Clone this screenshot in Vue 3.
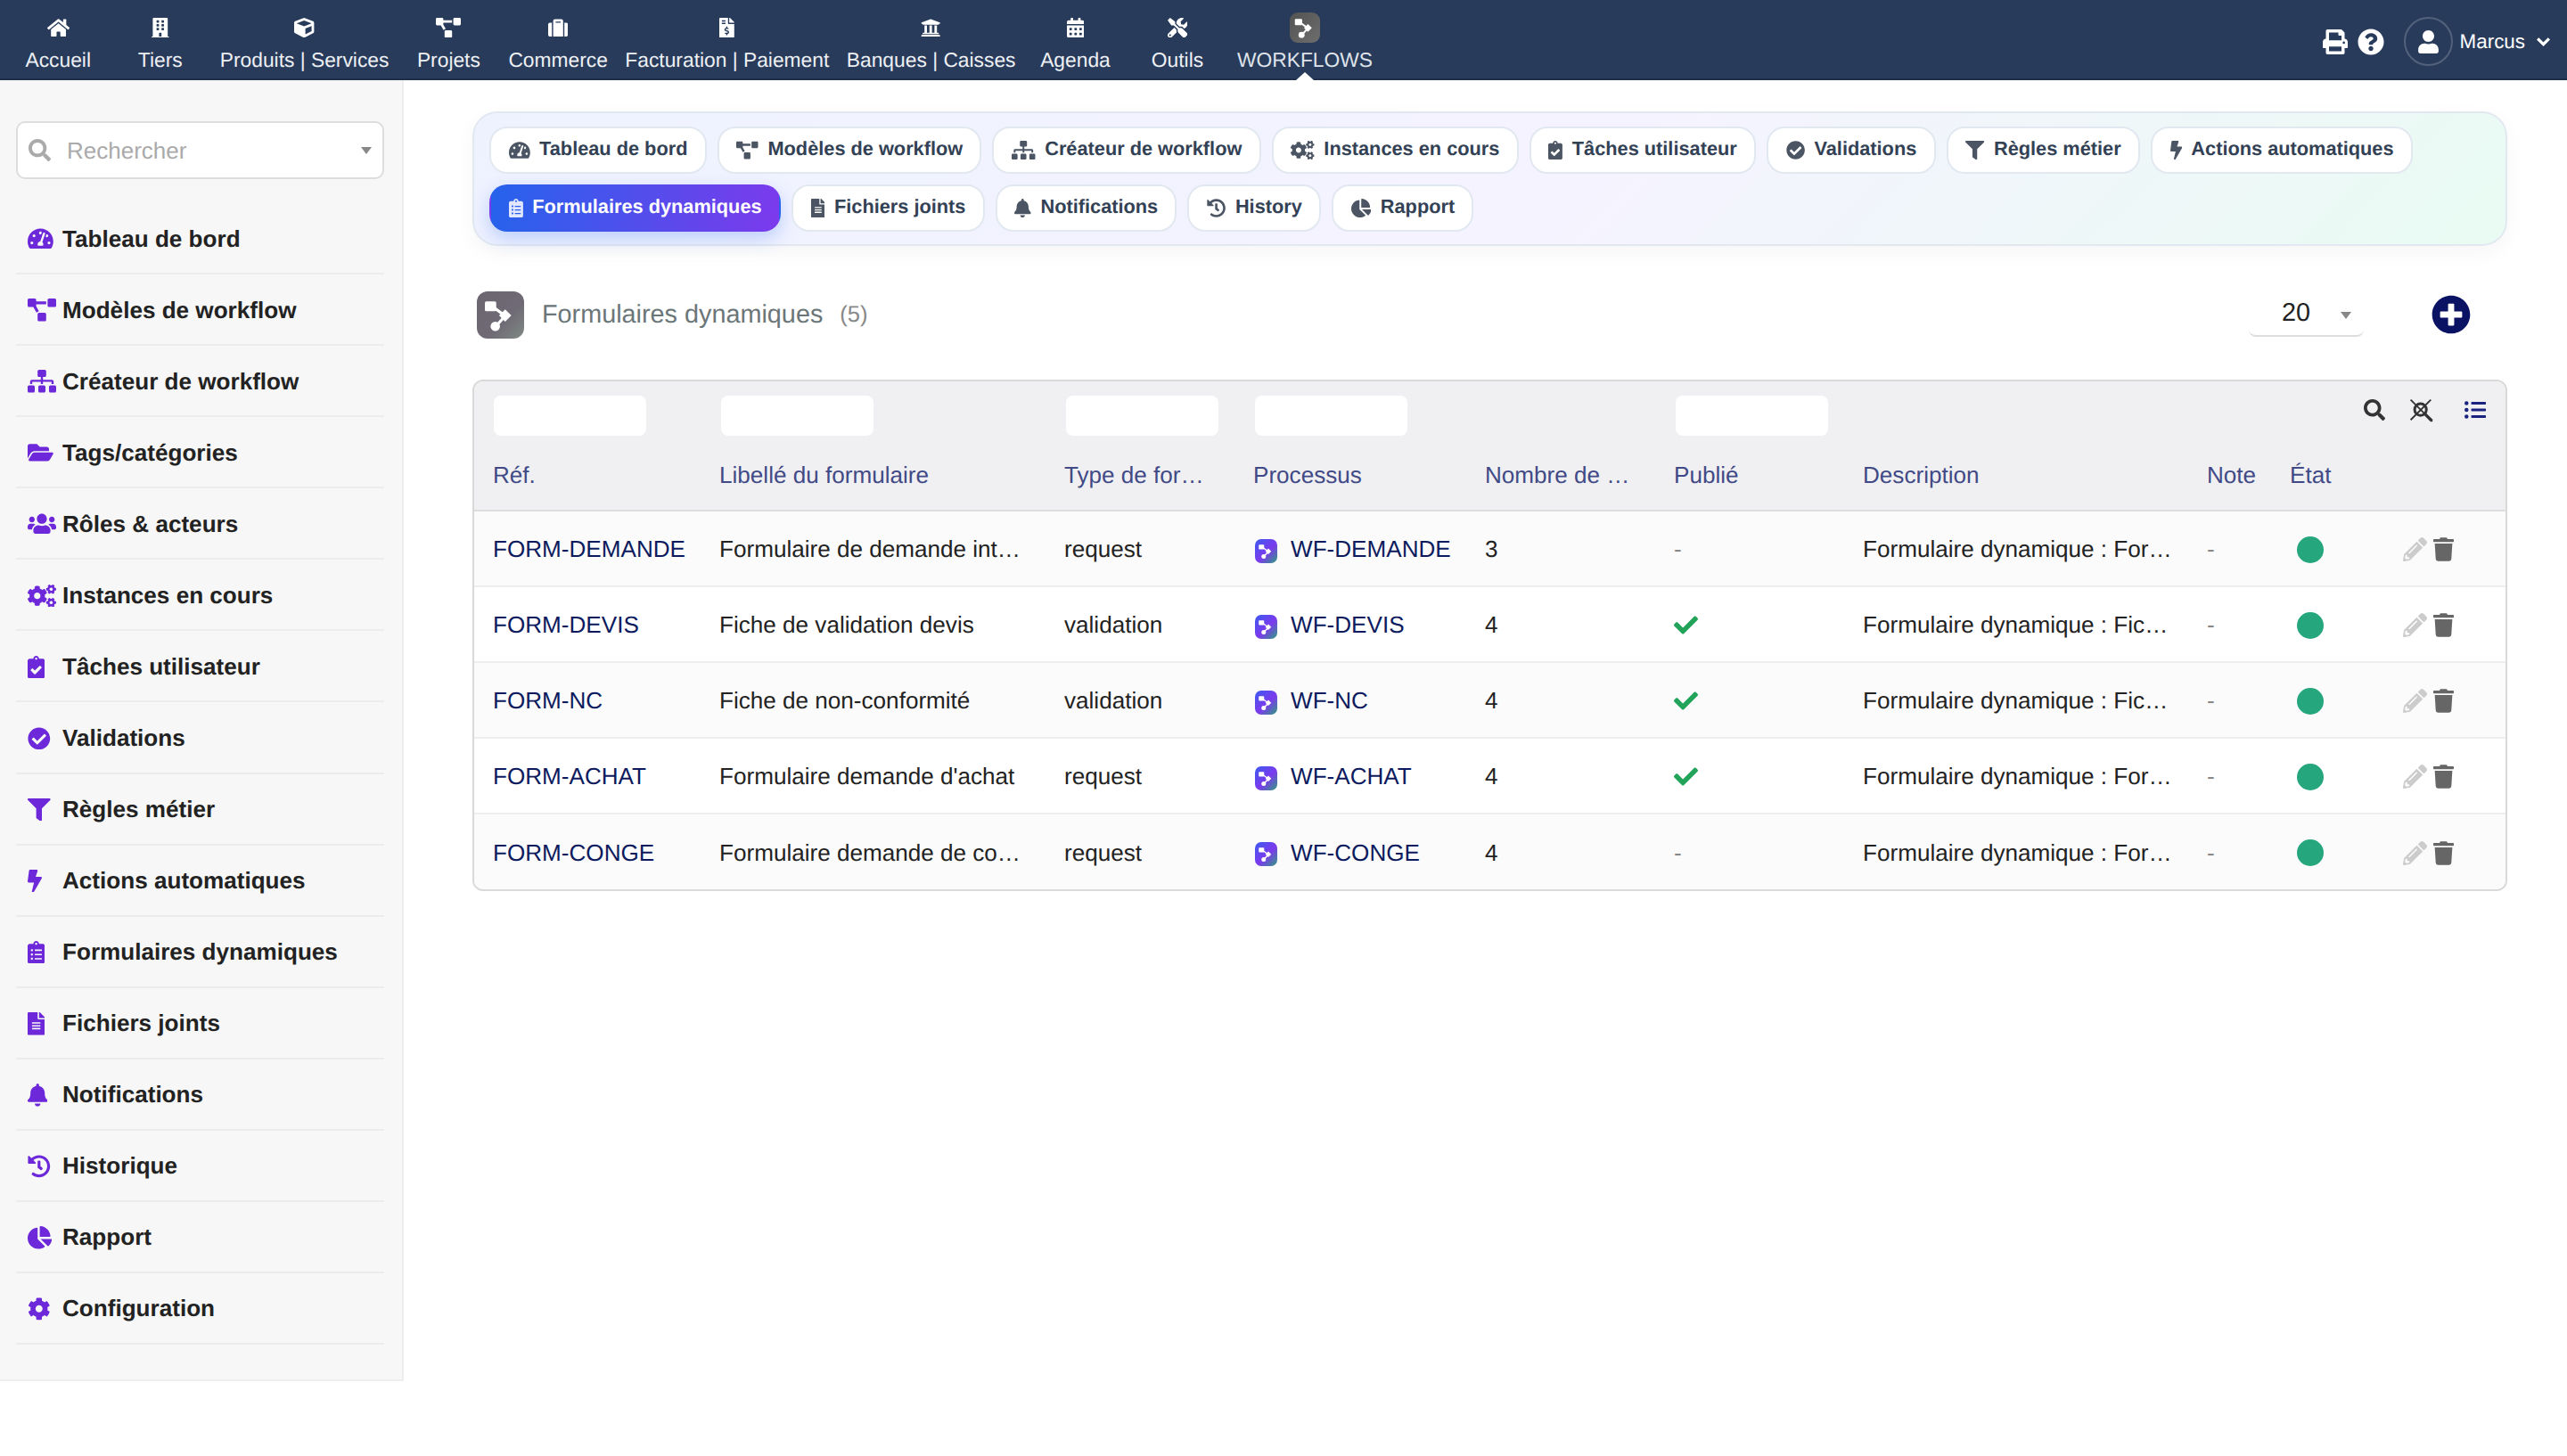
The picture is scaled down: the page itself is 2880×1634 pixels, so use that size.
<template>
  <div class="app">
    <!-- Barre du haut -->
    <header class="topbar">
      <nav class="topnav">
        <a v-for="item in topItems" :key="item.label" class="topnav-item" :class="{ active: item.active }">
          <span class="topnav-icon">
            <span v-if="item.active" class="wf-box">
              <svg viewBox="0 0 100 100" class="wf-glyph"><use href="#wf-glyph" /></svg>
            </span>
            <svg v-else :viewBox="`0 0 ${icons[item.icon].w} 512`" class="ico"><path :d="icons[item.icon].d" /></svg>
          </span>
          <span class="topnav-label">{{ item.label }}</span>
        </a>
      </nav>
      <div class="topright">
        <svg viewBox="0 0 512 512" class="ico top-print"><path :d="icons.print.d" /></svg>
        <svg viewBox="0 0 512 512" class="ico top-help"><path :d="icons.help.d" /></svg>
        <span class="avatar">
          <svg viewBox="0 0 448 512" class="ico"><path :d="icons.user.d" /></svg>
        </span>
        <span class="username">Marcus</span>
        <svg viewBox="0 0 16 10" class="chevron"><polyline points="2,2 8,8 14,2" /></svg>
      </div>
    </header>

    <!-- définition du glyphe workflow -->
    <svg class="defs" width="0" height="0">
      <defs>
        <g id="wf-glyph">
          <path d="M30 30 L60 52 L40 74" fill="none" stroke="currentColor" stroke-width="6" />
          <rect x="17" y="21" width="24" height="21" rx="3" fill="currentColor" />
          <path d="M60 38 L73 51 L60 64 L47 51 Z" fill="currentColor" />
          <circle cx="39" cy="74" r="10" fill="currentColor" />
        </g>
      </defs>
    </svg>

    <div class="layout">
      <!-- Menu latéral -->
      <aside class="sidebar">
        <div class="side-search">
          <svg viewBox="0 0 512 512" class="ico"><path :d="icons.search.d" /></svg>
          <input type="text" placeholder="Rechercher" />
          <span class="caret"></span>
        </div>
        <ul class="side-menu">
          <li v-for="item in sideItems" :key="item.label" class="side-item">
            <span class="side-icon">
              <svg :viewBox="`0 0 ${icons[item.icon].w} 512`" class="ico"><path :d="icons[item.icon].d" /></svg>
            </span>
            <span>{{ item.label }}</span>
          </li>
        </ul>
      </aside>

      <main class="content">
        <!-- Onglets -->
        <div class="tabs">
          <a v-for="tab in tabs" :key="tab.label" class="tab" :class="{ active: tab.active }">
            <svg :viewBox="`0 0 ${icons[tab.icon].w} 512`" class="ico"><path :d="icons[tab.icon].d" /></svg>
            <span>{{ tab.label }}</span>
          </a>
        </div>

        <div class="title-row">
          <span class="title-icon">
            <svg viewBox="0 0 100 100" class="title-glyph"><use href="#wf-glyph" /></svg>
          </span>
          <h1 class="title">Formulaires dynamiques</h1>
          <span class="count">(5)</span>
          <div class="limit">
            <span>20</span>
            <span class="caret"></span>
          </div>
          <svg viewBox="0 0 512 512" class="ico add-btn"><path :d="icons.plus.d" /></svg>
        </div>

        <!-- Liste -->
        <div class="card">
          <table class="list">
            <colgroup>
              <col class="c-ref" /><col class="c-label" /><col class="c-type" /><col class="c-proc" />
              <col class="c-nb" /><col class="c-pub" /><col class="c-desc" /><col class="c-note" />
              <col class="c-state" /><col class="c-act" />
            </colgroup>
            <thead>
              <tr class="filters">
                <th><input type="text" /></th>
                <th><input type="text" /></th>
                <th><input type="text" /></th>
                <th><input type="text" /></th>
                <th></th>
                <th><input type="text" /></th>
                <th colspan="4">
                  <div class="tools">
                    <svg viewBox="0 0 512 512" class="ico tool"><path :d="icons.search.d" /></svg>
                    <svg viewBox="0 0 512 512" class="tool tool-clear">
                      <circle cx="240" cy="240" r="125" fill="none" stroke="#333" stroke-width="56" />
                      <path d="M30 30 L490 490 M460 30 L30 460" stroke="#333" stroke-width="36" fill="none" />
                      <path d="M340 340 L480 480" stroke="#333" stroke-width="64" fill="none" />
                    </svg>
                    <svg viewBox="0 0 512 512" class="ico tool tool-list"><path :d="icons.list.d" /></svg>
                  </div>
                </th>
              </tr>
              <tr class="labels">
                <th v-for="h in headers" :key="h">{{ h }}</th>
                <th></th>
              </tr>
            </thead>
            <tbody>
              <tr v-for="row in rows" :key="row.ref">
                <td><a class="link">{{ row.ref }}</a></td>
                <td>{{ row.label }}</td>
                <td>{{ row.type }}</td>
                <td>
                  <span class="proc">
                    <span class="proc-icon">
                      <svg viewBox="0 0 100 100"><use href="#wf-glyph" /></svg>
                    </span>
                    <a class="link">{{ row.proc }}</a>
                  </span>
                </td>
                <td>{{ row.nb }}</td>
                <td>
                  <svg v-if="row.pub" viewBox="0 0 512 512" class="ico check"><path :d="icons.check.d" /></svg>
                  <span v-else class="dash">-</span>
                </td>
                <td>{{ row.desc }}</td>
                <td><span class="dash">-</span></td>
                <td><span class="dot"></span></td>
                <td>
                  <span class="actions">
                    <svg viewBox="0 0 512 512" class="ico pencil"><path :d="icons.pencil.d" /></svg>
                    <svg viewBox="0 0 448 512" class="ico trash"><path :d="icons.trash.d" /></svg>
                  </span>
                </td>
              </tr>
            </tbody>
          </table>
        </div>
      </main>
    </div>
  </div>
</template>

<script setup>
// tracés des icônes
const icons = {
  home: { w: 576, d: 'M280.37 148.26L96 300.11V464a16 16 0 0 0 16 16l112.06-.29a16 16 0 0 0 15.92-16V368a16 16 0 0 1 16-16h64a16 16 0 0 1 16 16v95.64a16 16 0 0 0 16 16.05L464 480a16 16 0 0 0 16-16V300L295.67 148.26a12.19 12.19 0 0 0-15.3 0zM571.6 251.47L488 182.56V44.05a12 12 0 0 0-12-12h-56a12 12 0 0 0-12 12v72.61L318.47 43a48 48 0 0 0-61 0L4.34 251.47a12 12 0 0 0-1.6 16.9l25.5 31A12 12 0 0 0 45.15 301l235.22-193.74a12.19 12.19 0 0 1 15.3 0L530.9 301a12 12 0 0 0 16.9-1.6l25.5-31a12 12 0 0 0-1.7-16.93z' },
  building: { w: 448, d: 'M436 480h-20V24c0-13.255-10.745-24-24-24H56C42.745 0 32 10.745 32 24v456H12c-6.627 0-12 5.373-12 12v20h448v-20c0-6.627-5.373-12-12-12zM128 76c0-6.627 5.373-12 12-12h40c6.627 0 12 5.373 12 12v40c0 6.627-5.373 12-12 12h-40c-6.627 0-12-5.373-12-12V76zm0 96c0-6.627 5.373-12 12-12h40c6.627 0 12 5.373 12 12v40c0 6.627-5.373 12-12 12h-40c-6.627 0-12-5.373-12-12v-40zm52 148h-40c-6.627 0-12-5.373-12-12v-40c0-6.627 5.373-12 12-12h40c6.627 0 12 5.373 12 12v40c0 6.627-5.373 12-12 12zm76 160h-64v-84c0-6.627 5.373-12 12-12h40c6.627 0 12 5.373 12 12v84zm64-172c0 6.627-5.373 12-12 12h-40c-6.627 0-12-5.373-12-12v-40c0-6.627 5.373-12 12-12h40c6.627 0 12 5.373 12 12v40zm0-96c0 6.627-5.373 12-12 12h-40c-6.627 0-12-5.373-12-12v-40c0-6.627 5.373-12 12-12h40c6.627 0 12 5.373 12 12v40zm0-96c0 6.627-5.373 12-12 12h-40c-6.627 0-12-5.373-12-12V76c0-6.627 5.373-12 12-12h40c6.627 0 12 5.373 12 12v40z' },
  cube: { w: 512, d: 'M239.1 6.3l-208 78c-18.7 7-31.1 25-31.1 45v225.1c0 18.2 10.3 34.8 26.5 42.9l208 104c13.5 6.8 29.4 6.8 42.9 0l208-104c16.3-8.1 26.5-24.8 26.5-42.9V129.3c0-20-12.4-37.9-31.1-44.9l-208-78C262 2.2 250 2.2 239.1 6.3zM256 68.4l192 72v1.1l-192 78-192-78v-1.1l192-72zm32 356V275.5l160-65v133.9l-160 80z' },
  diagram: { w: 640, d: 'M384 320H256c-17.67 0-32 14.33-32 32v128c0 17.67 14.33 32 32 32h128c17.67 0 32-14.33 32-32V352c0-17.67-14.33-32-32-32zM192 32c0-17.67-14.33-32-32-32H32C14.33 0 0 14.33 0 32v128c0 17.67 14.33 32 32 32h95.72l73.16 128.04C211.98 300.98 232.4 288 256 288h.28L192 175.51V128h224V64H192V32zM608 0H480c-17.67 0-32 14.33-32 32v128c0 17.67 14.33 32 32 32h128c17.67 0 32-14.33 32-32V32c0-17.67-14.33-32-32-32z' },
  suitcase: { w: 512, d: 'M128 480h256V80c0-26.5-21.5-48-48-48H176c-26.5 0-48 21.5-48 48v400zm64-384h128v32H192V96zm320 80v256c0 26.5-21.5 48-48 48h-48V128h48c26.5 0 48 21.5 48 48zM96 480H48c-26.5 0-48-21.5-48-48V176c0-26.5 21.5-48 48-48h48v352z' },
  invoice: { w: 384, d: 'M377 105L279.1 7c-4.5-4.5-10.6-7-17-7H256v128h128v-6.1c0-6.3-2.5-12.4-7-16.9zm-153 31V0H24C10.7 0 0 10.7 0 24v464c0 13.3 10.7 24 24 24h336c13.3 0 24-10.7 24-24V160H248c-13.2 0-24-10.8-24-24zM64 72c0-4.42 3.58-8 8-8h80c4.42 0 8 3.58 8 8v16c0 4.42-3.58 8-8 8H72c-4.42 0-8-3.58-8-8V72zm0 80v-16c0-4.42 3.58-8 8-8h80c4.42 0 8 3.58 8 8v16c0 4.42-3.58 8-8 8H72c-4.42 0-8-3.58-8-8zm144 263.88V440c0 4.42-3.58 8-8 8h-16c-4.42 0-8-3.58-8-8v-24.29c-11.29-.58-22.27-4.52-31.37-11.35-3.9-2.93-4.1-8.77-.57-12.14l11.75-11.21c2.77-2.64 6.89-2.76 10.13-.73 3.87 2.42 8.26 3.72 12.82 3.72h28.11c6.5 0 11.8-5.92 11.8-13.19 0-5.95-3.61-11.19-8.77-12.73l-45-13.5c-18.59-5.58-31.58-23.42-31.58-43.39 0-24.52 19.05-44.44 42.67-45.07V232c0-4.42 3.58-8 8-8h16c4.42 0 8 3.58 8 8v24.29c11.29.58 22.27 4.51 31.37 11.35 3.9 2.93 4.1 8.77.57 12.14l-11.75 11.21c-2.77 2.64-6.89 2.76-10.13.73-3.87-2.43-8.26-3.72-12.82-3.72h-28.11c-6.5 0-11.8 5.92-11.8 13.19 0 5.95 3.61 11.19 8.77 12.73l45 13.5c18.59 5.58 31.58 23.42 31.58 43.39 0 24.53-19.05 44.44-42.67 45.07z' },
  bank: { w: 512, d: 'M496 128v16a8 8 0 0 1-8 8h-24v12c0 6.627-5.373 12-12 12H60c-6.627 0-12-5.373-12-12v-12H24a8 8 0 0 1-8-8v-16a8 8 0 0 1 4.941-7.392l232-88a7.996 7.996 0 0 1 6.118 0l232 88A8 8 0 0 1 496 128zm-24 304H40c-13.255 0-24 10.745-24 24v16a8 8 0 0 0 8 8h464a8 8 0 0 0 8-8v-16c0-13.255-10.745-24-24-24zM96 192v192H60c-6.627 0-12 5.373-12 12v20h416v-20c0-6.627-5.373-12-12-12h-36V192h-64v192h-64V192h-64v192h-64V192H96z' },
  calendar: { w: 448, d: 'M0 464c0 26.5 21.5 48 48 48h352c26.5 0 48-21.5 48-48V192H0v272zm320-196c0-6.6 5.4-12 12-12h40c6.6 0 12 5.4 12 12v40c0 6.6-5.4 12-12 12h-40c-6.6 0-12-5.4-12-12v-40zm0 128c0-6.6 5.4-12 12-12h40c6.6 0 12 5.4 12 12v40c0 6.6-5.4 12-12 12h-40c-6.6 0-12-5.4-12-12v-40zM192 268c0-6.6 5.4-12 12-12h40c6.6 0 12 5.4 12 12v40c0 6.6-5.4 12-12 12h-40c-6.6 0-12-5.4-12-12v-40zm0 128c0-6.6 5.4-12 12-12h40c6.6 0 12 5.4 12 12v40c0 6.6-5.4 12-12 12h-40c-6.6 0-12-5.4-12-12v-40zM64 268c0-6.6 5.4-12 12-12h40c6.6 0 12 5.4 12 12v40c0 6.6-5.4 12-12 12H76c-6.6 0-12-5.4-12-12v-40zm0 128c0-6.6 5.4-12 12-12h40c6.6 0 12 5.4 12 12v40c0 6.6-5.4 12-12 12H76c-6.6 0-12-5.4-12-12v-40zM400 64h-48V16c0-8.8-7.2-16-16-16h-32c-8.8 0-16 7.2-16 16v48H160V16c0-8.8-7.2-16-16-16h-32c-8.8 0-16 7.2-16 16v48H48C21.5 64 0 85.5 0 112v48h448v-48c0-26.5-21.5-48-48-48z' },
  tools: { w: 512, d: 'M501.1 395.7L384 278.6c-23.1-23.1-57.6-27.6-85.4-13.9L192 158.1V96L64 0 0 64l96 128h62.1l106.6 106.6c-13.6 27.8-9.2 62.3 13.9 85.4l117.1 117.1c14.6 14.6 38.2 14.6 52.7 0l52.7-52.7c14.5-14.6 14.5-38.2 0-52.7zM331.7 225c28.3 0 54.9 11 74.9 31l19.4 19.4c15.8-6.9 30.8-16.5 43.8-29.5 37.1-37.1 49.7-89.3 37.9-136.7-2.2-9-13.5-12.1-20.1-5.5l-74.4 74.4-67.9-11.3L334 98.9l74.4-74.4c6.6-6.6 3.4-17.9-5.7-20.2-47.4-11.7-99.6.9-136.6 37.9-28.5 28.5-41.9 66.1-41.2 103.6l82.1 82.1c8.1-1.9 16.5-2.9 24.7-2.9zm-103.9 82l-56.7-56.7L18.7 402.8c-25 25-25 65.5 0 90.5s65.5 25 90.5 0l123.6-123.6c-7.6-19.9-9.9-41.6-5-62.7zM64 472c-13.2 0-24-10.8-24-24 0-13.3 10.7-24 24-24s24 10.7 24 24c0 13.2-10.7 24-24 24z' },
  print: { w: 512, d: 'M448 192V77.25c0-8.49-3.37-16.62-9.37-22.63L393.37 9.37c-6-6-14.14-9.37-22.63-9.37H96C78.33 0 64 14.33 64 32v160c-35.35 0-64 28.65-64 64v112c0 8.84 7.16 16 16 16h48v96c0 17.67 14.33 32 32 32h320c17.67 0 32-14.33 32-32v-96h48c8.84 0 16-7.16 16-16V256c0-35.35-28.65-64-64-64zm-64 256H128v-96h256v96zm0-224H128V64h192v48c0 8.84 7.16 16 16 16h48v96zm48 72c-13.25 0-24-10.75-24-24 0-13.26 10.75-24 24-24s24 10.74 24 24c0 13.25-10.75 24-24 24z' },
  help: { w: 512, d: 'M504 256c0 136.997-111.043 248-248 248S8 392.997 8 256C8 119.083 119.043 8 256 8s248 111.083 248 248zM262.655 90c-54.497 0-89.255 22.957-116.549 63.758-3.536 5.286-2.353 12.415 2.715 16.258l34.699 26.31c5.205 3.947 12.621 3.008 16.665-2.122 17.864-22.658 30.113-35.797 57.303-35.797 20.429 0 45.698 13.148 45.698 32.958 0 14.976-12.363 22.667-32.534 33.976C247.128 238.528 216 254.941 216 296v4c0 6.627 5.373 12 12 12h56c6.627 0 12-5.373 12-12v-1.333c0-28.462 83.186-29.647 83.186-106.667 0-58.002-60.165-102-116.531-102zM256 338c-25.365 0-46 20.635-46 46 0 25.364 20.635 46 46 46s46-20.636 46-46c0-25.365-20.635-46-46-46z' },
  user: { w: 448, d: 'M224 256c70.7 0 128-57.3 128-128S294.7 0 224 0 96 57.3 96 128s57.3 128 128 128zm89.6 32h-16.7c-22.2 10.2-46.9 16-72.9 16s-50.6-5.8-72.9-16h-16.7C60.2 288 0 348.2 0 422.4V464c0 26.5 21.5 48 48 48h352c26.5 0 48-21.5 48-48v-41.6c0-74.2-60.2-134.4-134.4-134.4z' },
  gauge: { w: 576, d: 'M288 32C128.94 32 0 160.94 0 320c0 52.8 14.25 102.26 39.06 144.8 5.61 9.62 16.3 15.2 27.44 15.2h443c11.14 0 21.83-5.58 27.44-15.2C561.75 422.26 576 372.8 576 320c0-159.06-128.94-288-288-288zm0 64c14.71 0 26.58 10.13 30.32 23.65-1.11 2.26-2.64 4.23-3.45 6.67l-9.22 27.67c-5.13 3.49-10.97 6.01-17.64 6.01-17.67 0-32-14.33-32-32S270.33 96 288 96zM96 384c-17.67 0-32-14.33-32-32s14.33-32 32-32 32 14.33 32 32-14.33 32-32 32zm48-160c-17.67 0-32-14.33-32-32s14.33-32 32-32 32 14.33 32 32-14.33 32-32 32zm246.77-72.41l-61.33 184C343.13 347.33 352 364.54 352 384c0 11.72-3.38 22.55-8.88 32H232.88c-5.5-9.45-8.88-20.28-8.88-32 0-33.94 26.5-61.43 59.9-63.59l61.34-184.01c4.17-12.56 17.73-19.45 30.36-15.17 12.57 4.19 19.35 17.79 15.17 30.36zm14.66 57.2l15.52-46.55c3.47-1.29 7.13-2.23 11.05-2.23 17.67 0 32 14.33 32 32s-14.33 32-32 32c-11.38-.01-20.89-6.28-26.57-15.22zM480 384c-17.67 0-32-14.33-32-32s14.33-32 32-32 32 14.33 32 32-14.33 32-32 32z' },
  sitemap: { w: 640, d: 'M128 352H32c-17.67 0-32 14.33-32 32v96c0 17.67 14.33 32 32 32h96c17.67 0 32-14.33 32-32v-96c0-17.67-14.33-32-32-32zm-24-80h192v48h48v-48h192v48h48v-57.59c0-21.17-17.23-38.41-38.41-38.41H344v-64h40c17.67 0 32-14.33 32-32V32c0-17.67-14.33-32-32-32H256c-17.67 0-32 14.33-32 32v96c0 17.67 14.33 32 32 32h40v64H94.41C73.23 224 56 241.23 56 262.41V320h48v-48zm264 80h-96c-17.67 0-32 14.33-32 32v96c0 17.67 14.33 32 32 32h96c17.67 0 32-14.33 32-32v-96c0-17.67-14.33-32-32-32zm240 0h-96c-17.67 0-32 14.33-32 32v96c0 17.67 14.33 32 32 32h96c17.67 0 32-14.33 32-32v-96c0-17.67-14.33-32-32-32z' },
  folder: { w: 576, d: 'M572.694 292.093L500.27 416.248A63.997 63.997 0 0 1 444.989 448H45.025c-18.523 0-30.064-20.093-20.731-36.093l72.424-124.155A64 64 0 0 1 152 256h399.964c18.523 0 30.064 20.093 20.73 36.093zM152 224h328v-48c0-26.51-21.49-48-48-48H272l-64-64H48C21.49 64 0 85.49 0 112v278.046l69.077-118.418C86.214 242.25 117.989 224 152 224z' },
  users: { w: 640, d: 'M96 224c35.3 0 64-28.7 64-64s-28.7-64-64-64-64 28.7-64 64 28.7 64 64 64zm448 0c35.3 0 64-28.7 64-64s-28.7-64-64-64-64 28.7-64 64 28.7 64 64 64zm32 32h-64c-17.6 0-33.5 7.1-45.1 18.6 40.3 22.1 68.9 62 75.1 109.4h66c17.7 0 32-14.3 32-32v-32c0-35.3-28.7-64-64-64zm-256 0c61.9 0 112-50.1 112-112S381.9 32 320 32 208 82.1 208 144s50.1 112 112 112zm76.8 32h-8.3c-20.8 10-43.9 16-68.5 16s-47.6-6-68.5-16h-8.3C179.6 288 128 339.6 128 403.2V432c0 26.5 21.5 48 48 48h288c26.5 0 48-21.5 48-48v-28.8c0-63.6-51.6-115.2-115.2-115.2zm-223.7-13.4C161.5 263.1 145.6 256 128 256H64c-35.3 0-64 28.7-64 64v32c0 17.7 14.3 32 32 32h65.9c6.3-47.4 34.9-87.3 75.2-109.4z' },
  cogs: { w: 640, d: 'M512.1 191l-8.2 14.3c-3 5.3-9.4 7.5-15.1 5.4-11.8-4.4-22.6-10.7-32.1-18.6-4.6-3.8-5.8-10.5-2.8-15.7l8.2-14.3c-6.9-8-12.3-17.3-15.9-27.4h-16.5c-6 0-11.2-4.3-12.2-10.3-2-12-2.1-24.6 0-37.1 1-6 6.2-10.4 12.2-10.4h16.5c3.6-10.1 9-19.4 15.9-27.4l-8.2-14.3c-3-5.2-1.9-11.9 2.8-15.7 9.5-7.9 20.4-14.2 32.1-18.6 5.7-2.1 12.1.1 15.1 5.4l8.2 14.3c10.5-1.9 21.2-1.9 31.7 0L552 6.3c3-5.3 9.4-7.5 15.1-5.4 11.8 4.4 22.6 10.7 32.1 18.6 4.6 3.8 5.8 10.5 2.8 15.7l-8.2 14.3c6.9 8 12.3 17.3 15.9 27.4h16.5c6 0 11.2 4.3 12.2 10.3 2 12 2.1 24.6 0 37.1-1 6-6.2 10.4-12.2 10.4h-16.5c-3.6 10.1-9 19.4-15.9 27.4l8.2 14.3c3 5.2 1.9 11.9-2.8 15.7-9.5 7.9-20.4 14.2-32.1 18.6-5.7 2.1-12.1-.1-15.1-5.4l-8.2-14.3c-10.4 1.9-21.2 1.9-31.7 0zm-10.5-58.8c38.5 29.6 82.4-14.3 52.8-52.8-38.5-29.7-82.4 14.3-52.8 52.8zM386.3 286.1l33.7 16.8c10.1 5.8 14.5 18.1 10.5 29.1-8.9 24.2-26.4 46.4-42.6 65.8-7.4 8.9-20.2 11.1-30.3 5.3l-29.1-16.8c-16 13.7-34.6 24.6-54.9 31.7v33.6c0 11.6-8.3 21.6-19.7 23.6-24.6 4.2-50.4 4.4-75.9 0-11.5-2-20-11.9-20-23.6V418c-20.3-7.2-38.9-18-54.9-31.7L74 403c-10 5.8-22.9 3.6-30.3-5.3-16.2-19.4-33.3-41.6-42.2-65.7-4-10.9.4-23.2 10.5-29.1l33.3-16.8c-3.9-20.9-3.9-42.4 0-63.4L12 205.8c-10.1-5.8-14.6-18.1-10.5-29 8.9-24.2 26-46.4 42.2-65.8 7.4-8.9 20.2-11.1 30.3-5.3l29.1 16.8c16-13.7 34.6-24.6 54.9-31.7V57.1c0-11.5 8.2-21.5 19.6-23.5 24.6-4.2 50.5-4.4 76-.1 11.5 2 20 11.9 20 23.6v33.6c20.3 7.2 38.9 18 54.9 31.7l29.1-16.8c10-5.8 22.9-3.6 30.3 5.3 16.2 19.4 33.2 41.6 42.1 65.8 4 10.9.1 23.2-10 29.1l-33.7 16.8c3.9 21 3.9 42.5 0 63.5zm-117.6 21.1c59.2-77-28.7-164.9-105.7-105.7-59.2 77 28.7 164.9 105.7 105.7zm243.4 182.7l-8.2 14.3c-3 5.3-9.4 7.5-15.1 5.4-11.8-4.4-22.6-10.7-32.1-18.6-4.6-3.8-5.8-10.5-2.8-15.7l8.2-14.3c-6.9-8-12.3-17.3-15.9-27.4h-16.5c-6 0-11.2-4.3-12.2-10.3-2-12-2.1-24.6 0-37.1 1-6 6.2-10.4 12.2-10.4h16.5c3.6-10.1 9-19.4 15.9-27.4l-8.2-14.3c-3-5.2-1.9-11.9 2.8-15.7 9.5-7.9 20.4-14.2 32.1-18.6 5.7-2.1 12.1.1 15.1 5.4l8.2 14.3c10.5-1.9 21.2-1.9 31.7 0l8.2-14.3c3-5.3 9.4-7.5 15.1-5.4 11.8 4.4 22.6 10.7 32.1 18.6 4.6 3.8 5.8 10.5 2.8 15.7l-8.2 14.3c6.9 8 12.3 17.3 15.9 27.4h16.5c6 0 11.2 4.3 12.2 10.3 2 12 2.1 24.6 0 37.1-1 6-6.2 10.4-12.2 10.4h-16.5c-3.6 10.1-9 19.4-15.9 27.4l8.2 14.3c3 5.2 1.9 11.9-2.8 15.7-9.5 7.9-20.4 14.2-32.1 18.6-5.7 2.1-12.1-.1-15.1-5.4l-8.2-14.3c-10.4 1.9-21.2 1.9-31.7 0zM501.6 431c38.5 29.6 82.4-14.3 52.8-52.8-38.5-29.6-82.4 14.3-52.8 52.8z' },
  task: { w: 384, d: 'M336 64h-80c0-35.3-28.7-64-64-64s-64 28.7-64 64H48C21.5 64 0 85.5 0 112v352c0 26.5 21.5 48 48 48h288c26.5 0 48-21.5 48-48V112c0-26.5-21.5-48-48-48zM192 40c13.3 0 24 10.7 24 24s-10.7 24-24 24-24-10.7-24-24 10.7-24 24-24zm121.2 231.8l-143 141.8c-4.7 4.7-12.3 4.6-17-.1l-82.6-83.3c-4.7-4.7-4.6-12.3.1-17L99.1 285c4.7-4.7 12.3-4.6 17 .1l46 46.4 106-105.2c4.7-4.7 12.3-4.6 17 .1l28.2 28.4c4.7 4.8 4.6 12.3-.1 17z' },
  valid: { w: 512, d: 'M504 256c0 136.967-111.033 248-248 248S8 392.967 8 256 119.033 8 256 8s248 111.033 248 248zM227.314 387.314l184-184c6.248-6.248 6.248-16.379 0-22.627l-22.627-22.627c-6.248-6.249-16.379-6.249-22.628 0L216 308.118l-70.059-70.059c-6.248-6.248-16.379-6.248-22.628 0l-22.627 22.627c-6.248 6.248-6.248 16.379 0 22.627l104 104c6.249 6.249 16.379 6.249 22.628.001z' },
  filter: { w: 512, d: 'M487.976 0H24.028C2.71 0-8.047 25.866 7.058 40.971L192 225.941V432c0 7.831 3.821 15.17 10.237 19.662l80 55.98C298.02 518.69 320 507.493 320 487.98V225.941l184.947-184.97C520.021 25.896 509.338 0 487.976 0z' },
  bolt: { w: 320, d: 'M296 160H180.6l42.6-129.8C227.2 15 215.7 0 200 0H56C44 0 33.8 8.9 32.2 20.8l-32 240C-1.7 275.2 9.5 288 24 288h118.7L96.6 482.5c-3.6 15.2 8 29.5 23.3 29.5 8.4 0 16.4-4.4 20.8-12l176-304c9.3-15.9-2.2-36-20.7-36z' },
  form: { w: 384, d: 'M336 64h-80c0-35.3-28.7-64-64-64s-64 28.7-64 64H48C21.5 64 0 85.5 0 112v352c0 26.5 21.5 48 48 48h288c26.5 0 48-21.5 48-48V112c0-26.5-21.5-48-48-48zM96 424c-13.3 0-24-10.7-24-24s10.7-24 24-24 24 10.7 24 24-10.7 24-24 24zm0-96c-13.3 0-24-10.7-24-24s10.7-24 24-24 24 10.7 24 24-10.7 24-24 24zm0-96c-13.3 0-24-10.7-24-24s10.7-24 24-24 24 10.7 24 24-10.7 24-24 24zm96-192c13.3 0 24 10.7 24 24s-10.7 24-24 24-24-10.7-24-24 10.7-24 24-24zm128 368c0 4.4-3.6 8-8 8H168c-4.4 0-8-3.6-8-8v-16c0-4.4 3.6-8 8-8h144c4.4 0 8 3.6 8 8v16zm0-96c0 4.4-3.6 8-8 8H168c-4.4 0-8-3.6-8-8v-16c0-4.4 3.6-8 8-8h144c4.4 0 8 3.6 8 8v16zm0-96c0 4.4-3.6 8-8 8H168c-4.4 0-8-3.6-8-8v-16c0-4.4 3.6-8 8-8h144c4.4 0 8 3.6 8 8v16z' },
  file: { w: 384, d: 'M224 136V0H24C10.7 0 0 10.7 0 24v464c0 13.3 10.7 24 24 24h336c13.3 0 24-10.7 24-24V160H248c-13.2 0-24-10.8-24-24zm64 236c0 6.6-5.4 12-12 12H108c-6.6 0-12-5.4-12-12v-8c0-6.6 5.4-12 12-12h168c6.6 0 12 5.4 12 12v8zm0-64c0 6.6-5.4 12-12 12H108c-6.6 0-12-5.4-12-12v-8c0-6.6 5.4-12 12-12h168c6.6 0 12 5.4 12 12v8zm0-72v8c0 6.6-5.4 12-12 12H108c-6.6 0-12-5.4-12-12v-8c0-6.6 5.4-12 12-12h168c6.6 0 12 5.4 12 12zm96-114.1v6.1H256V0h6.1c6.4 0 12.5 2.5 17 7l97.9 98c4.5 4.5 7 10.6 7 16.9z' },
  bell: { w: 448, d: 'M224 512c35.32 0 63.97-28.65 63.97-64H160.03c0 35.35 28.65 64 63.97 64zm215.39-149.71c-19.32-20.76-55.47-51.99-55.47-154.29 0-77.7-54.48-139.9-127.94-155.16V32c0-17.67-14.32-32-31.98-32s-31.98 14.33-31.98 32v20.84C118.56 68.1 64.08 130.3 64.08 208c0 102.3-36.15 133.53-55.47 154.29-6 6.45-8.66 14.16-8.61 21.71.11 16.4 12.98 32 32.1 32h383.8c19.12 0 32-15.6 32.1-32 .05-7.55-2.61-15.27-8.61-21.71z' },
  history: { w: 512, d: 'M504 255.531c.253 136.64-111.18 248.372-247.82 248.468-59.015.042-113.223-20.53-155.822-54.911-11.077-8.94-11.905-25.541-1.839-35.607l11.267-11.267c8.609-8.609 22.353-9.551 31.891-1.984C173.062 425.135 212.781 440 256 440c101.705 0 184-82.311 184-184 0-101.705-82.311-184-184-184-48.814 0-93.149 18.969-126.068 49.932l50.754 50.754c10.08 10.08 2.941 27.314-11.313 27.314H24c-8.837 0-16-7.163-16-16V38.627c0-14.254 17.234-21.393 27.314-11.314l49.372 49.372C129.209 34.136 189.552 8 256 8c136.81 0 247.747 110.78 248 247.531zm-180.912 78.784l9.823-12.63c8.138-10.463 6.253-25.542-4.21-33.679L288 256.349V152c0-13.255-10.745-24-24-24h-16c-13.255 0-24 10.745-24 24v135.651l65.409 50.874c10.463 8.137 25.541 6.253 33.679-4.21z' },
  pie: { w: 544, d: 'M527.79 288H290.5l158.03 158.03c6.04 6.04 15.98 6.53 22.19.68 38.7-36.46 65.32-85.61 73.13-140.86 1.34-9.46-6.51-17.85-16.06-17.85zm-15.83-64.8C503.72 103.74 408.26 8.28 288.8.04 279.68-.59 272 7.1 272 16.24V240h223.77c9.14 0 16.82-7.68 16.19-16.8zM224 288V50.71c0-9.55-8.39-17.4-17.84-16.06C86.99 51.49-4.1 155.6.14 280.37 4.5 408.51 114.83 513.59 243.03 511.98c50.4-.63 96.97-16.87 135.26-44.03 7.9-5.6 8.42-17.23 1.57-24.08L224 288z' },
  cog: { w: 512, d: 'M487.4 315.7l-42.6-24.6c4.3-23.2 4.3-47 0-70.2l42.6-24.6c4.9-2.8 7.1-8.6 5.5-14-11.1-35.6-30-67.8-54.7-94.6-3.8-4.1-10-5.1-14.8-2.3L380.8 110c-17.9-15.4-38.5-27.3-60.8-35.1V25.8c0-5.6-3.9-10.5-9.4-11.7-36.7-8.2-74.3-7.8-109.2 0-5.5 1.2-9.4 6.1-9.4 11.7V75c-22.2 7.9-42.8 19.8-60.8 35.1L88.7 85.5c-4.9-2.8-11-1.9-14.8 2.3-24.7 26.7-43.6 58.9-54.7 94.6-1.7 5.4.6 11.2 5.5 14L67.3 221c-4.3 23.2-4.3 47 0 70.2l-42.6 24.6c-4.9 2.8-7.1 8.6-5.5 14 11.1 35.6 30 67.8 54.7 94.6 3.8 4.1 10 5.1 14.8 2.3l42.6-24.6c17.9 15.4 38.5 27.3 60.8 35.1v49.2c0 5.6 3.9 10.5 9.4 11.7 36.7 8.2 74.3 7.8 109.2 0 5.5-1.2 9.4-6.1 9.4-11.7v-49.2c22.2-7.9 42.8-19.8 60.8-35.1l42.6 24.6c4.9 2.8 11 1.9 14.8-2.3 24.7-26.7 43.6-58.9 54.7-94.6 1.5-5.5-.7-11.3-5.6-14.1zM256 336c-44.1 0-80-35.9-80-80s35.9-80 80-80 80 35.9 80 80-35.9 80-80 80z' },
  search: { w: 512, d: 'M505 442.7L405.3 343c-4.5-4.5-10.6-7-17-7H372c27.6-35.3 44-79.7 44-128C416 93.1 322.9 0 208 0S0 93.1 0 208s93.1 208 208 208c48.3 0 92.7-16.4 128-44v16.3c0 6.4 2.5 12.5 7 17l99.7 99.7c9.4 9.4 24.6 9.4 33.9 0l28.3-28.3c9.4-9.4 9.4-24.6.1-34zM208 336c-70.7 0-128-57.2-128-128 0-70.7 57.2-128 128-128 70.7 0 128 57.2 128 128 0 70.7-57.2 128-128 128z' },
  list: { w: 512, d: 'M48 48a48 48 0 1 0 48 48 48 48 0 0 0-48-48zm0 160a48 48 0 1 0 48 48 48 48 0 0 0-48-48zm0 160a48 48 0 1 0 48 48 48 48 0 0 0-48-48zm448 16H176a16 16 0 0 0-16 16v32a16 16 0 0 0 16 16h320a16 16 0 0 0 16-16v-32a16 16 0 0 0-16-16zm0-320H176a16 16 0 0 0-16 16v32a16 16 0 0 0 16 16h320a16 16 0 0 0 16-16V80a16 16 0 0 0-16-16zm0 160H176a16 16 0 0 0-16 16v32a16 16 0 0 0 16 16h320a16 16 0 0 0 16-16v-32a16 16 0 0 0-16-16z' },
  trash: { w: 448, d: 'M432 32H312l-9.4-18.7A24 24 0 0 0 281.1 0H166.8a23.72 23.72 0 0 0-21.4 13.3L136 32H16A16 16 0 0 0 0 48v32a16 16 0 0 0 16 16h416a16 16 0 0 0 16-16V48a16 16 0 0 0-16-16zM53.2 467a48 48 0 0 0 47.9 45h245.8a48 48 0 0 0 47.9-45L416 128H32z' },
  pencil: { w: 512, d: 'M497.9 142.1l-46.1 46.1c-4.7 4.7-12.3 4.7-17 0l-111-111c-4.7-4.7-4.7-12.3 0-17l46.1-46.1c18.7-18.7 49.1-18.7 67.9 0l60.1 60.1c18.8 18.7 18.8 49.1 0 67.9zM284.2 99.8L21.6 362.4.4 483.9c-2.9 16.4 11.4 30.6 27.8 27.8l121.5-21.3 262.6-262.6c4.7-4.7 4.7-12.3 0-17l-111-111c-4.8-4.7-12.4-4.7-17.1 0zM124.1 339.9c-5.5-5.5-5.5-14.3 0-19.8l154-154c5.5-5.5 14.3-5.5 19.8 0s5.5 14.3 0 19.8l-154 154c-5.5 5.5-14.3 5.5-19.8 0zM88 424h48v36.3l-64.5 11.3-31.1-31.1L51.7 376H88v48z' },
  check: { w: 512, d: 'M173.898 439.404l-166.4-166.4c-9.997-9.997-9.997-26.206 0-36.204l36.203-36.204c9.997-9.998 26.207-9.998 36.204 0L192 312.69 432.095 72.596c9.997-9.997 26.207-9.997 36.204 0l36.203 36.204c9.997 9.997 9.997 26.206 0 36.204l-294.4 294.401c-9.998 9.997-26.207 9.997-36.204-.001z' },
  plus: { w: 512, d: 'M256 8C119 8 8 119 8 256s111 248 248 248 248-111 248-248S393 8 256 8zm144 276c0 6.6-5.4 12-12 12h-92v92c0 6.6-5.4 12-12 12h-56c-6.6 0-12-5.4-12-12v-92h-92c-6.6 0-12-5.4-12-12v-56c0-6.6 5.4-12 12-12h92v-92c0-6.6 5.4-12 12-12h56c6.6 0 12 5.4 12 12v92h92c6.6 0 12 5.4 12 12v56z' },
}

const topItems = [
  { label: 'Accueil', icon: 'home' },
  { label: 'Tiers', icon: 'building' },
  { label: 'Produits | Services', icon: 'cube' },
  { label: 'Projets', icon: 'diagram' },
  { label: 'Commerce', icon: 'suitcase' },
  { label: 'Facturation | Paiement', icon: 'invoice' },
  { label: 'Banques | Caisses', icon: 'bank' },
  { label: 'Agenda', icon: 'calendar' },
  { label: 'Outils', icon: 'tools' },
  { label: 'WORKFLOWS', active: true },
]

const sideItems = [
  { label: 'Tableau de bord', icon: 'gauge' },
  { label: 'Modèles de workflow', icon: 'diagram' },
  { label: 'Créateur de workflow', icon: 'sitemap' },
  { label: 'Tags/catégories', icon: 'folder' },
  { label: 'Rôles & acteurs', icon: 'users' },
  { label: 'Instances en cours', icon: 'cogs' },
  { label: 'Tâches utilisateur', icon: 'task' },
  { label: 'Validations', icon: 'valid' },
  { label: 'Règles métier', icon: 'filter' },
  { label: 'Actions automatiques', icon: 'bolt' },
  { label: 'Formulaires dynamiques', icon: 'form' },
  { label: 'Fichiers joints', icon: 'file' },
  { label: 'Notifications', icon: 'bell' },
  { label: 'Historique', icon: 'history' },
  { label: 'Rapport', icon: 'pie' },
  { label: 'Configuration', icon: 'cog' },
]

const tabs = [
  { label: 'Tableau de bord', icon: 'gauge' },
  { label: 'Modèles de workflow', icon: 'diagram' },
  { label: 'Créateur de workflow', icon: 'sitemap' },
  { label: 'Instances en cours', icon: 'cogs' },
  { label: 'Tâches utilisateur', icon: 'task' },
  { label: 'Validations', icon: 'valid' },
  { label: 'Règles métier', icon: 'filter' },
  { label: 'Actions automatiques', icon: 'bolt' },
  { label: 'Formulaires dynamiques', icon: 'form', active: true },
  { label: 'Fichiers joints', icon: 'file' },
  { label: 'Notifications', icon: 'bell' },
  { label: 'History', icon: 'history' },
  { label: 'Rapport', icon: 'pie' },
]

const headers = ['Réf.', 'Libellé du formulaire', 'Type de formulaire', 'Processus', 'Nombre de champs', 'Publié', 'Description', 'Note', 'État']

const rows = [
  { ref: 'FORM-DEMANDE', label: 'Formulaire de demande interne', type: 'request', proc: 'WF-DEMANDE', nb: 3, pub: false, desc: 'Formulaire dynamique : Formulaire de demande interne' },
  { ref: 'FORM-DEVIS', label: 'Fiche de validation devis', type: 'validation', proc: 'WF-DEVIS', nb: 4, pub: true, desc: 'Formulaire dynamique : Fiche de validation devis' },
  { ref: 'FORM-NC', label: 'Fiche de non-conformité', type: 'validation', proc: 'WF-NC', nb: 4, pub: true, desc: 'Formulaire dynamique : Fiche de non-conformité' },
  { ref: 'FORM-ACHAT', label: "Formulaire demande d'achat", type: 'request', proc: 'WF-ACHAT', nb: 4, pub: true, desc: "Formulaire dynamique : Formulaire demande d'achat" },
  { ref: 'FORM-CONGE', label: 'Formulaire demande de congé', type: 'request', proc: 'WF-CONGE', nb: 4, pub: false, desc: 'Formulaire dynamique : Formulaire demande de congé' },
]
</script>

<style scoped>
.app {
  font-family: "Liberation Sans", Arial, sans-serif;
  color: #222;
  text-rendering: geometricPrecision;
}

.ico {
  display: block;
  flex: none;
  fill: currentColor;
}

.defs {
  position: absolute;
}

/* barre du haut */
.topbar {
  display: flex;
  align-items: stretch;
  height: 90px;
  box-sizing: border-box;
  background: #283b5b;
  border-bottom: 2px solid #1f2f4b;
  padding-left: 8px;
}

.topnav {
  display: flex;
}

.topnav-item {
  position: relative;
  display: flex;
  flex-direction: column;
  align-items: center;
  box-sizing: content-box;
  min-width: 95px;
  padding: 0 9.75px;
  color: #fff;
  font-size: 22.8px;
  white-space: nowrap;
}

.topnav-icon {
  display: flex;
  align-items: center;
  justify-content: center;
  height: 34px;
  margin-top: 14px;
}

.topnav-icon .ico {
  height: 22.4px;
  width: auto;
}

.topnav-label {
  line-height: 26px;
  margin-top: 6px;
  color: #eef0f4;
}

.topnav-item.active .topnav-label {
  color: #dfe3ea;
}

.topnav-item.active::after {
  content: "";
  position: absolute;
  left: 50%;
  bottom: -2px;
  margin-left: -10px;
  border-left: 10px solid transparent;
  border-right: 10px solid transparent;
  border-bottom: 9px solid #fff;
}

.wf-box {
  display: flex;
  width: 34px;
  height: 34px;
  border-radius: 9px;
  background: linear-gradient(135deg, #525252, #6e6e6e);
  color: #fff;
}

.wf-glyph {
  width: 34px;
  height: 34px;
}

.topright {
  display: flex;
  align-items: center;
  margin-left: auto;
  padding-top: 5px;
  padding-right: 18px;
  color: #fff;
}

.top-print {
  width: 28px;
  height: 28px;
}

.top-help {
  width: 30px;
  height: 30px;
  margin-left: 11px;
}

.avatar {
  display: flex;
  align-items: center;
  justify-content: center;
  width: 55px;
  height: 55px;
  box-sizing: border-box;
  margin-left: 22px;
  border: 2px solid rgba(255, 255, 255, 0.2);
  border-radius: 50%;
}

.avatar .ico {
  width: 23px;
  height: 26px;
}

.username {
  margin-left: 8px;
  font-size: 22.4px;
}

.chevron {
  width: 17px;
  height: 11px;
  margin-left: 12px;
  fill: none;
  stroke: #fff;
  stroke-width: 3;
}

/* page */
.layout {
  display: flex;
  align-items: flex-start;
}

/* menu latéral */
.sidebar {
  flex: none;
  width: 453px;
  box-sizing: border-box;
  padding: 46px 20px 39px 18px;
  background: #f7f7f7;
  border-right: 2px solid #eeeeee;
  border-bottom: 2px solid #eeeeee;
}

.side-search {
  display: flex;
  align-items: center;
  height: 65px;
  box-sizing: border-box;
  padding: 0 12px;
  background: #fff;
  border: 2px solid #dddddd;
  border-radius: 10px;
  color: #aaa;
}

.side-search .ico {
  width: 25px;
  height: 25px;
}

.side-search input {
  flex: 1;
  min-width: 0;
  margin: 2px 0 0 18px;
  border: 0;
  outline: 0;
  padding: 0;
  background: none;
  font: 26px "Liberation Sans", Arial, sans-serif;
  text-rendering: geometricPrecision;
  color: #444;
}

.side-search input::placeholder {
  color: #aaaaaa;
  opacity: 1;
}

.caret {
  display: block;
  width: 0;
  height: 0;
  border-left: 6.5px solid transparent;
  border-right: 6.5px solid transparent;
  border-top: 8px solid #888;
}

.side-menu {
  list-style: none;
  margin: 27px 0 0;
  padding: 0;
}

.side-item {
  display: flex;
  align-items: center;
  height: 80.07px;
  box-sizing: border-box;
  border-bottom: 2px solid #ececec;
  padding: 2px 0 0 13px;
  font-size: 26.1px;
  font-weight: 700;
  color: #222;
}

.side-icon {
  flex: none;
  width: 39px;
  color: #6d28d9;
}

.side-icon .ico {
  height: 25.6px;
  width: auto;
}

/* contenu */
.content {
  flex: 1;
  min-width: 0;
  padding: 35px 67px 0 77px;
}

.tabs {
  display: flex;
  flex-wrap: wrap;
  align-content: flex-start;
  gap: 12px;
  height: 151px;
  box-sizing: border-box;
  padding: 15px 17px;
  background: linear-gradient(135deg, #eef2ff 0%, #f5f3ff 55%, #e9fbf3 100%);
  border: 2px solid #e2e8f0;
  border-radius: 28px;
  box-shadow: 0 8px 24px rgba(15, 23, 42, 0.04);
}

.tab {
  display: flex;
  align-items: center;
  gap: 10.5px;
  height: 53px;
  box-sizing: border-box;
  padding: 0 19.25px 0 19.75px;
  background: #fff;
  border: 2px solid #e2e8f0;
  border-radius: 20px;
  font-size: 21.76px;
  font-weight: 700;
  color: #334155;
  white-space: nowrap;
}

.tab .ico {
  height: 21.2px;
  width: auto;
  color: #4b5563;
}

.tab:nth-child(2) .ico {
  width: 24.5px;
}

.tab span {
  position: relative;
  top: -2px;
}

.tab.active {
  background: linear-gradient(100deg, #2563eb, #7c3aed);
  border-color: transparent;
  color: #fff;
  box-shadow: 0 8px 20px rgba(37, 99, 235, 0.25);
}

.tab.active .ico {
  color: #e0e7ff;
}

.title-row {
  display: flex;
  align-items: center;
  height: 53px;
  margin-top: 51px;
  padding-left: 5px;
}

.title-icon {
  display: flex;
  width: 53px;
  height: 53px;
  border-radius: 12px;
  background: linear-gradient(135deg, #6b6570 0%, #6f6a75 60%, #7f8a84 100%);
  color: #fff;
}

.title-glyph {
  width: 53px;
  height: 53px;
}

.title {
  margin: 0 0 0 20px;
  font-size: 28.8px;
  font-weight: 400;
  color: #6b7678;
}

.count {
  margin-left: 19px;
  font-size: 25.6px;
  color: #888;
}

.limit {
  display: flex;
  align-items: center;
  justify-content: flex-end;
  gap: 34px;
  width: 129px;
  height: 48px;
  box-sizing: border-box;
  margin-left: auto;
  padding-right: 14px;
  padding-bottom: 2px;
  border-bottom: 2px solid #dddddd;
  border-radius: 0 0 8px 8px;
  font-size: 28.8px;
  color: #222;
}

.limit .caret {
  margin-top: 4px;
}

.add-btn {
  width: 44px;
  height: 44px;
  margin: 0 41px 2px 76px;
  color: #0a1263;
}

/* liste */
.card {
  margin-top: 46px;
  background: #fff;
  border: 2px solid #d9d9d9;
  border-radius: 12px;
  overflow: hidden;
}

.list {
  width: 100%;
  table-layout: fixed;
  border-collapse: collapse;
  font-size: 26.1px;
}

.c-ref { width: 255px; }
.c-label { width: 387px; }
.c-type { width: 212px; }
.c-proc { width: 260px; }
.c-nb { width: 212px; }
.c-pub { width: 212px; }
.c-desc { width: 386px; }
.c-note { width: 93px; }
.c-state { width: 117px; }

.list th,
.list td {
  padding: 0 20px;
  overflow: hidden;
  white-space: nowrap;
  text-overflow: ellipsis;
  text-align: left;
  font-weight: 400;
}

.list th:first-child,
.list td:first-child {
  padding-left: 21px;
  padding-right: 10px;
}

.list td:nth-child(7) {
  padding-right: 16px;
}

.labels th:nth-child(8) {
  padding-right: 6px;
}

thead {
  background: #f0f0f2;
}

.filters {
  height: 72px;
}

.filters input {
  display: block;
  width: 171px;
  height: 45px;
  box-sizing: border-box;
  margin: 4px 0 0 2px;
  border: 0;
  border-radius: 8px;
  background: #fff;
}

.filters th:first-child input {
  margin-left: 1px;
}

.tools {
  display: flex;
  justify-content: flex-end;
  align-items: center;
  margin-bottom: 8px;
  padding-right: 2px;
}

.tool {
  width: 24px;
  height: 24px;
  color: #333;
}

.tool-clear {
  display: block;
  width: 27px;
  height: 27px;
  margin-left: 27px;
}

.tool-list {
  margin-left: 35px;
  color: #1a237e;
}

.labels {
  height: 73px;
  border-bottom: 2px solid #dddddd;
}

.labels th {
  color: #414a86;
  padding-bottom: 6px;
}

tbody tr {
  height: 85px;
  border-bottom: 2px solid #eeeeee;
}

tbody tr:last-child {
  border-bottom: 0;
}

tbody tr:nth-child(odd) {
  background: #fbfbfb;
}

.list tbody td {
  padding-top: 2px;
}

.link {
  color: #0d1b5e;
}

.proc {
  display: flex;
  align-items: center;
  gap: 15px;
  margin-left: 2px;
}

.proc-icon {
  display: flex;
  flex: none;
  width: 25px;
  height: 27px;
  margin-top: 3px;
  border-radius: 7px;
  background: linear-gradient(135deg, #3b5bf0 0%, #7c3aed 55%, #2e9d7f 100%);
  color: #fff;
}

.proc-icon svg {
  width: 25px;
  height: 27px;
}

.check {
  width: 27px;
  height: 27px;
  color: #22a35a;
}

.dash {
  color: #888;
}

.dot {
  display: block;
  width: 30px;
  height: 30px;
  margin-left: 8px;
  border-radius: 50%;
  background: #25a67d;
}

.actions {
  display: flex;
  align-items: center;
  gap: 7px;
  padding-left: 10px;
}

.pencil {
  width: 27px;
  height: 27px;
  color: #cccccc;
}

.trash {
  width: 23px;
  height: 27px;
  color: #666666;
}
</style>
